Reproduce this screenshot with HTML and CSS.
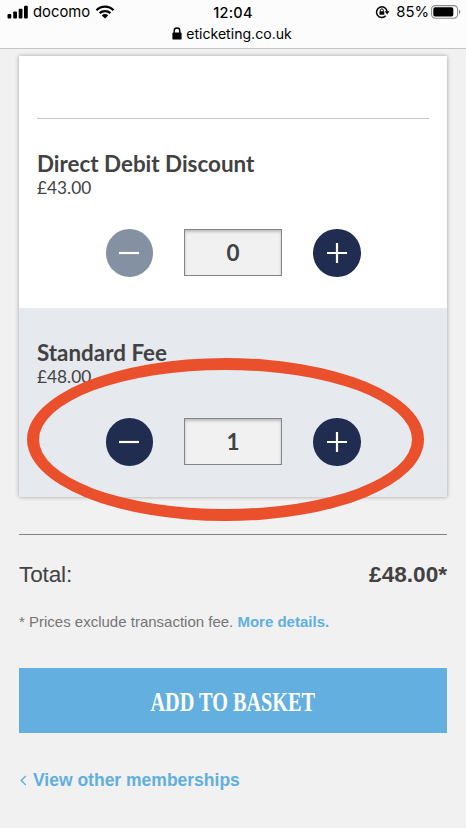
FILE: index.html
```html
<!DOCTYPE html>
<html lang="en">
<head>
<meta charset="utf-8">
<title>Memberships</title>
<link rel="stylesheet" href="styles.css">
</head>
<body>

<header class="browser">
	<div class="status">
		<div class="left">
			<svg class="signal" width="22" height="14" viewBox="0 0 22 14">
				<rect x="0.5" y="9" width="3.8" height="4.5" rx="1"/>
				<rect x="6.2" y="6.6" width="3.8" height="6.9" rx="1"/>
				<rect x="11.7" y="3.7" width="3.8" height="9.8" rx="1"/>
				<rect x="17" y="0.7" width="3.8" height="12.8" rx="1"/>
			</svg>
			<span class="carrier">docomo</span>
			<svg class="wifi" width="20" height="14" viewBox="0 0 20 14">
				<path d="M1.5 5.2a12.1 12.1 0 0 1 17 0M4.6 8.2a7.8 7.8 0 0 1 10.8 0" fill="none" stroke="#000" stroke-width="2.3"/>
				<path d="M6.8 10.4a4.6 4.6 0 0 1 6.4 0L10 13.6z"/>
			</svg>
		</div>
		<span class="clock">12:04</span>
		<div class="right">
			<svg class="rotation" width="15" height="14" viewBox="0 0 15 14">
				<path d="M10.7 10.8A5.3 5.3 0 1 1 12.1 6.6" fill="none" stroke="#000" stroke-width="1.5"/>
				<path d="M9.7 6.3h4.8l-2.4 3.2z"/>
				<path d="M5.4 6.6V5.4a1.5 1.5 0 0 1 3 0v1.2" fill="none" stroke="#000"/>
				<rect x="4.5" y="6.2" width="4.8" height="3.5" rx=".5"/>
			</svg>
			<span class="percent">85%</span>
			<svg class="battery" width="31" height="14" viewBox="0 0 31 14">
				<rect x="0.6" y="0.6" width="26" height="12.6" rx="3.6" fill="none" stroke="#8b8b8b" stroke-width="1.1"/>
				<rect x="2.3" y="2.3" width="20" height="9.2" rx="1.8"/>
				<path d="M28 4.8q1.4.6 1.4 2.1T28 9z" fill="#8b8b8b"/>
			</svg>
		</div>
	</div>
	<div class="address">
		<svg width="10" height="13" viewBox="0 0 10 13">
			<path d="M2.2 6V3.8a2.8 2.8 0 0 1 5.6 0V6" fill="none" stroke="#000" stroke-width="1.4"/>
			<rect x="0.4" y="5.4" width="9.2" height="7.2" rx="1.2"/>
		</svg>
		<span class="url">eticketing.co.uk</span>
	</div>
</header>

<main class="page">
	<div class="card">
		<section class="fee first">
			<h2>Direct Debit Discount</h2>
			<div class="price">£43.00</div>
			<div class="quantity">
				<button class="round disabled"><svg width="22" height="22"><path d="M1 11h20"/></svg></button>
				<div class="count">0</div>
				<button class="round"><svg width="22" height="22"><path d="M1 11h20M11 1v20"/></svg></button>
			</div>
		</section>
		<section class="fee selected">
			<h2>Standard Fee</h2>
			<div class="price">£48.00</div>
			<div class="quantity">
				<button class="round"><svg width="22" height="22"><path d="M1 11h20"/></svg></button>
				<div class="count">1</div>
				<button class="round"><svg width="22" height="22"><path d="M1 11h20M11 1v20"/></svg></button>
			</div>
			<div class="highlight"></div>
		</section>
	</div>

	<div class="total">
		<span class="label">Total:</span>
		<span class="sum">£48.00*</span>
	</div>
	<p class="note">* Prices exclude transaction fee. <a class="link">More details.</a></p>
	<button class="basket"><span>ADD TO BASKET</span></button>
	<a class="back link">
		<svg width="7" height="11" viewBox="0 0 7 11"><path d="M5.8 1L1.2 5.5L5.8 10"/></svg>
		<span>View other memberships</span>
	</a>
</main>

</body>
</html>
```

FILE: styles.css
```css
*{
	box-sizing:border-box;
}
body{
	margin:0;
	height:828px;
	overflow:hidden;
	background:#f1f1f1;
	color:#424242;
	font-family:"Liberation Sans", Arial, sans-serif;
}
svg{
	display:block;
	flex:none;
}
button{
	border:0;
	padding:0;
	cursor:pointer;
}
.browser{
	height:49px;
	background:#fcfcfc;
	border-bottom:1px solid #c4c4c4;
	color:#000;
	font-family:Inter, sans-serif;
}
.status{
	display:grid;
	grid-template-columns:1fr auto 1fr;
	align-items:center;
	height:24px;
	padding:0 7px;
}
.left, .right{
	display:flex;
	align-items:center;
}
.right{
	justify-content:flex-end;
	margin-right:-3px;
}
.carrier{
	margin:0 5px 0 4px;
	font-size:14.8px;
}
.clock{
	font-size:14.5px;
	font-weight:500;
	letter-spacing:.3px;
}
.percent{
	margin:0 2px 0 6px;
	font-size:14.8px;
}
.address{
	display:flex;
	justify-content:center;
	align-items:center;
	height:19px;
	gap:4px;
	padding-right:2px;
	font-size:14.1px;
}
.page{
	padding:7px 19px 0;
}
.card{
	height:441px;
	background:#fff;
	box-shadow:0 0 4px rgba(0,0,0,.35);
}
.fee{
	padding:0 18px;
}
.first{
	height:252px;
	padding-top:62px;
}
.first h2{
	border-top:1px solid #c4c4c4;
	padding-top:31px;
}
.selected{
	position:relative;
	height:189px;
	padding-top:31px;
	background:#e6e9ee;
}
h2{
	margin:0;
	font:bold 22.4px/27px Lato, sans-serif;
}
.price{
	font:17.3px/21px Lato, sans-serif;
}
.quantity{
	display:flex;
	justify-content:center;
	align-items:center;
	gap:31px;
	margin-top:31px;
}
.round{
	display:flex;
	align-items:center;
	justify-content:center;
	width:47.5px;
	height:47.5px;
	border-radius:50%;
	background:#202d50;
}
.round path{
	fill:none;
	stroke:#fff;
	stroke-width:2.2;
}
.disabled{
	background:#8491a3;
}
.count{
	width:98px;
	height:47px;
	border:1px solid #858585;
	background:#f1f1f1;
	box-shadow:inset 0 2px 3px rgba(0,0,0,.22);
	text-align:center;
	font:bold 22.5px/45px Lato, sans-serif;
}
/* hand drawn ring over the chosen quantity */
.highlight{
	position:absolute;
	left:8px;
	top:50px;
	width:397px;
	height:163px;
	border:12px solid #eb502d;
	border-radius:50%;
	pointer-events:none;
}
.total{
	display:flex;
	justify-content:space-between;
	align-items:center;
	height:80px;
	margin-top:37px;
	border-top:1px solid #858585;
	font-size:22.6px;
}
.label{
	letter-spacing:-.15px;
}
.sum{
	font-weight:bold;
}
.note{
	margin:0;
	margin-top:-1px;
	color:#757575;
	font-size:15px;
	line-height:18px;
}
.link{
	color:#60afe0;
	font-weight:bold;
}
.basket{
	display:flex;
	align-items:center;
	justify-content:center;
	width:100%;
	height:65px;
	margin-top:37px;
	padding-top:3px;
	background:#62afe0;
	color:#fff;
	font:bold 27px/30px "Liberation Serif", "Times New Roman", serif;
}
.basket span{
	transform:scaleX(.75);
}
.back{
	display:flex;
	align-items:center;
	gap:6px;
	margin-top:37px;
	padding-left:1px;
	font-size:17.5px;
	line-height:21px;
}
.back path{
	fill:none;
	stroke:#60afe0;
	stroke-width:1.4;
}
```
